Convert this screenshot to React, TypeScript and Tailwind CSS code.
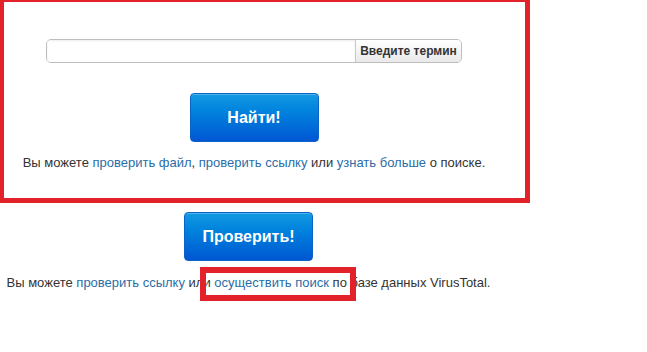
import React from 'react';

const Link: React.FC<{ children: React.ReactNode }> = ({ children }) => (
    <a href="#" className="text-[#2b6da6] no-underline">{children}</a>
);

const BlueButton: React.FC<{ label: string }> = ({ label }) => (
    <button className="w-[129px] h-[49px] rounded-[4px] border border-[#0b63c8] bg-gradient-to-b from-[#139ae2] to-[#0256d3] text-white text-[16px] font-bold shadow-[inset_0_1px_0_rgba(255,255,255,0.25)]">
        {label}
    </button>
);

export default function App() {
    return (
        <div className="relative w-[647px] h-[352px] overflow-hidden bg-white text-[13px] leading-4 text-[#333] font-['Liberation_Sans',Arial,sans-serif]">
            <div className="w-[530px] h-[203px] border-[#e2212b] border-l-4 border-r-[5px] border-b-[5px] border-t-2 flex flex-col items-center pr-[21px] pt-[37px]">
                <div className="flex w-[416px] h-[24px] rounded-[5px] border border-[#bdbdbd] overflow-hidden">
                    <input className="flex-1 bg-white outline-none shadow-[inset_0_1px_2px_rgba(0,0,0,0.08)]" />
                    <div className="w-[106px] flex items-center justify-center border-l border-[#c8c8c8] bg-gradient-to-b from-white to-[#e9e9e9] text-[12px] font-bold text-[#333]">
                        Введите термин
                    </div>
                </div>
                <div className="mt-[30px]">
                    <BlueButton label="Найти!" />
                </div>
                <p className="mt-[13px] whitespace-nowrap">
                    Вы можете <Link>проверить файл</Link>, <Link>проверить ссылку</Link> или <Link>узнать больше</Link> о поиске.
                </p>
            </div>
            <div className="w-[497px] flex flex-col items-center">
                <div className="mt-[9px]">
                    <BlueButton label="Проверить!" />
                </div>
                <p className="mt-[14px] whitespace-nowrap">
                    Вы можете <Link>проверить ссылку</Link> или <Link>осуществить поиск</Link> по базе данных VirusTotal.
                </p>
            </div>
            <div className="absolute left-[200px] top-[267px] w-[156px] h-[34px] border-[6px] border-[#e2212b]" />
        </div>
    );
}
